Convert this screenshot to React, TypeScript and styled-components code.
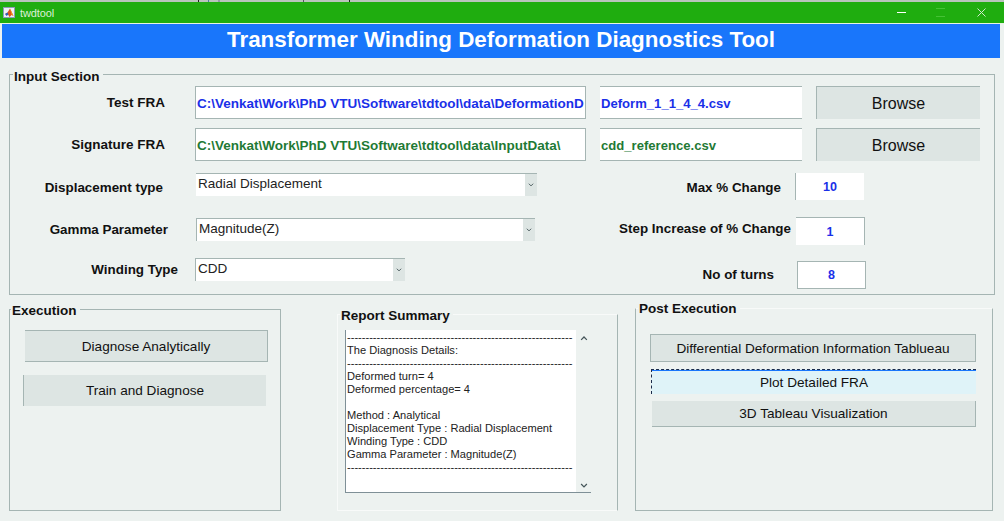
import React from 'react';
import styled, { createGlobalStyle } from 'styled-components';

const GlobalStyle = createGlobalStyle`
  html, body {
    margin: 0;
    padding: 0;
    background: #edf2f0;
    overflow: hidden;
  }
  * { box-sizing: border-box; }
`;

const Page = styled.div`
  width: 1004px;
  height: 521px;
  font-family: "Liberation Sans", Arial, sans-serif;
  background: #edf2f0;
  color: #111;
`;

const TopEdge = styled.div`
  height: 2px;
  background:
    linear-gradient(#222, #222) 198px 0 / 1px 100% no-repeat,
    linear-gradient(#4a7ea0, #4a7ea0) 208px 0 / 1px 100% no-repeat,
    linear-gradient(#99a, #99a) 218px 0 / 2px 100% no-repeat,
    linear-gradient(#556, #556) 303px 0 / 1px 100% no-repeat,
    linear-gradient(#222, #222) 349px 0 / 1px 100% no-repeat,
    #b9c4bc;
`;

const TitleBar = styled.div`
  height: 22px;
  background: #1fad0f;
  border-bottom: 1px solid #e6f3e3;
  display: flex;
  align-items: center;
  padding: 0 18px 0 3px;
  color: #dcefd8;
  font-size: 11px;
`;

const WindowName = styled.span`
  margin-left: 5px;
  flex: 1;
  letter-spacing: -0.1px;
`;

const WindowButton = styled.svg`
  width: 9px;
  height: 9px;
  margin-left: 30px;

  &:last-child {
    margin-left: 32px;
  }
`;

const Banner = styled.h1`
  margin: 0 4px 0 2px;
  height: 34px;
  background: #1976fb;
  color: #fff;
  font-size: 22.4px;
  font-weight: bold;
  line-height: 31px;
  text-align: center;
`;

const Panel = styled.section<{ $line?: string }>`
  position: relative;
  border: 1px solid ${({ $line }) => $line || '#a5b5b3'};
`;

const Legend = styled.span<{ $left?: number; $top?: number }>`
  position: absolute;
  top: ${({ $top }) => $top ?? -8}px;
  left: ${({ $left }) => $left ?? 3}px;
  padding: 0 3px 0 1px;
  background: #edf2f0;
  font-size: 13.5px;
  font-weight: bold;
  line-height: 15px;
  color: #111;
`;

const InputSection = styled(Panel)`
  margin: 16px 0 0 9px;
  width: 986px;
  height: 221px;
  padding: 11px 0 0 0;
`;

const FileRow = styled.div`
  display: flex;
  align-items: center;
  height: 33px;
  margin-bottom: 9px;
`;

const FileLabel = styled.label`
  width: 155px;
  text-align: right;
  font-size: 13.5px;
  font-weight: bold;
  margin-right: 30px;
  padding-bottom: 1px;
`;

const FileField = styled.div<{ $width: number; $color: string }>`
  width: ${({ $width }) => $width}px;
  height: 33px;
  margin-right: 14px;
  background: #fff;
  border: 1px solid #a5b5b3;
  color: ${({ $color }) => $color};
  font-size: 13.5px;
  font-weight: bold;
  line-height: 33px;
  padding-left: 1px;
  white-space: nowrap;
  overflow: hidden;
`;

const NameField = styled(FileField)`
  border-width: 1px 0 1px 0;
  font-size: 13.1px;
`;

const BrowseButton = styled.button`
  width: 164px;
  height: 33px;
  border: 0;
  border-top: 1px solid #a5b5b3;
  border-left: 1px solid #a5b5b3;
  background: #dde5e3;
  color: #111;
  font-family: inherit;
  font-size: 16px;
  padding: 2px 0 0;
`;

const LowerInputs = styled.div`
  display: flex;
  margin-top: 12px;
`;

const ChoiceColumn = styled.div`
  width: 600px;
`;

const ChoiceRow = styled.div<{ $gap: number }>`
  display: flex;
  align-items: center;
  height: 23px;
  margin-bottom: ${({ $gap }) => $gap}px;
`;

const ChoiceLabel = styled.label<{ $inset: number; $drop?: number }>`
  width: 185px;
  text-align: right;
  padding-right: ${({ $inset }) => $inset}px;
  margin-top: ${({ $drop }) => $drop ?? 0}px;
  font-size: 13.4px;
  font-weight: bold;
`;

const Select = styled.div<{ $width: number; $shift?: number; $edge?: boolean }>`
  display: flex;
  width: ${({ $width }) => $width}px;
  height: 23px;
  margin-left: ${({ $shift }) => $shift ?? 1}px;
  background: #fff;
  border-top: 1px solid #a5b5b3;
  border-left: ${({ $edge }) => ($edge ? '1px solid #a5b5b3' : '0')};
  font-size: 13.5px;
  color: #222;
`;

const SelectText = styled.span`
  flex: 1;
  padding-left: 2px;
  line-height: 20px;
`;

const SelectArrow = styled.span`
  width: 12px;
  background: #dde5e3;
  display: flex;
  align-items: center;
  justify-content: center;
`;

const SpinColumn = styled.div`
  width: 280px;
`;

const SpinRow = styled.div<{ $height: number; $gap: number }>`
  display: flex;
  align-items: center;
  height: ${({ $height }) => $height}px;
  margin-bottom: ${({ $gap }) => $gap}px;
`;

const SpinLabel = styled.label<{ $width: number; $inset: number; $lift: number }>`
  width: ${({ $width }) => $width}px;
  padding-right: ${({ $inset }) => $inset}px;
  margin-top: ${({ $lift }) => -$lift}px;
  text-align: right;
  font-size: 13.4px;
  font-weight: bold;
`;

const SpinValue = styled.div<{ $edge: string }>`
  width: 69px;
  height: 100%;
  background: #fff;
  border-style: solid;
  border-color: #a5b5b3;
  border-width: ${({ $edge }) => $edge};
  color: #1a30e8;
  font-size: 12.5px;
  font-weight: bold;
  display: flex;
  align-items: center;
  justify-content: center;
`;

const LowerPanels = styled.div`
  display: flex;
  align-items: flex-end;
  height: 216px;
`;

const ExecutionPanel = styled(Panel)`
  margin-left: 9px;
  width: 272px;
  height: 202px;
  padding-top: 20px;
`;

const ActionButton = styled.button<{ $left: number; $width: number; $height: number; $gap: number; $edge: string }>`
  display: block;
  margin: 0 0 ${({ $gap }) => $gap}px ${({ $left }) => $left}px;
  width: ${({ $width }) => $width}px;
  height: ${({ $height }) => $height}px;
  background: #dde5e3;
  border-style: solid;
  border-color: #a5b5b3;
  border-width: ${({ $edge }) => $edge};
  padding: 0;
  color: #111;
  font-family: inherit;
  font-size: 13.6px;
`;

const FocusedButton = styled(ActionButton)`
  background: #dff3f8;
  border-style: dashed;
  border-color: #1b2a4a;
  outline: none;
  box-shadow: inset 0 1px 0 0 #1976fb;
`;

const ReportPanel = styled(Panel)`
  margin-left: 56px;
  width: 281px;
  height: 197px;
  border-color: #f8faf9;
  border-right-color: #a5b5b3;
  padding: 15px 0 0 7px;
`;

const ReportBox = styled.div`
  display: flex;
  width: 246px;
  height: 163px;
  border-left: 1px solid #7f9097;
  border-bottom: 1px solid #7f9097;
`;

const ReportText = styled.pre`
  margin: 0;
  flex: 1;
  background: #fff;
  padding: 1px 0 0 1px;
  font-family: inherit;
  font-size: 11.1px;
  line-height: 13px;
  color: #222;
`;

const ReportScroll = styled.div`
  width: 15px;
  display: flex;
  flex-direction: column;
  justify-content: space-between;
  align-items: center;
  padding: 6px 0 4px;
`;

const PostPanel = styled(Panel)`
  margin-left: 17px;
  width: 358px;
  height: 203px;
  border-top-color: #f8faf9;
  padding-top: 25px;
`;

const Chevron = ({ up, size = 8 }: { up?: boolean; size?: number }) => (
  <svg width={size} height={size * 0.6} viewBox="0 0 8 5">
    <path d={up ? 'M1 4 L4 1 L7 4' : 'M1 1 L4 4 L7 1'} fill="none" stroke="#46565a" strokeWidth="1.3" />
  </svg>
);

const MatlabIcon = () => (
  <svg width="12" height="11" viewBox="0 0 12 11">
    <rect width="12" height="11" fill="#eef0f6" />
    <rect x="0.5" y="0.5" width="11" height="10" fill="none" stroke="#8d9bb5" />
    <path d="M2 7 L4.5 5.5 L7 1.5 L10.5 9 L8.5 8 L6.5 10 L5 7.5 Z" fill="#e0521a" />
    <path d="M7 1.5 L10.5 9 L8.5 7.5 Z" fill="#f4a01e" />
    <path d="M2 7 L4.5 5.5 L5.5 7.5 L3.5 9 Z" fill="#2f5fb5" />
  </svg>
);

const dashes = '-'.repeat(61);

const reportLines = [
  dashes,
  'The Diagnosis Details:',
  dashes,
  'Deformed turn= 4',
  'Deformed percentage= 4',
  '',
  'Method : Analytical',
  'Displacement Type : Radial Displacement',
  'Winding Type : CDD',
  'Gamma Parameter : Magnitude(Z)',
  dashes,
].join('\n');

export default function App() {
  return (
    <Page>
      <GlobalStyle />
      <TopEdge />
      <TitleBar>
        <MatlabIcon />
        <WindowName>twdtool</WindowName>
        <WindowButton viewBox="0 0 9 9">
          <path d="M0 4.5 H9" stroke="#ffffff" strokeWidth="1" />
        </WindowButton>
        <WindowButton viewBox="0 0 9 9">
          <path d="M0 0.5 H9 M0 8.5 H9" stroke="#45c235" strokeWidth="1" />
        </WindowButton>
        <WindowButton viewBox="0 0 9 9">
          <path d="M0.5 0.5 L8.5 8.5 M8.5 0.5 L0.5 8.5" stroke="#cfeacb" strokeWidth="1" />
        </WindowButton>
      </TitleBar>
      <Banner>Transformer Winding Deformation Diagnostics Tool</Banner>

      <InputSection>
        <Legend $top={-6}>Input Section</Legend>
        <FileRow>
          <FileLabel>Test FRA</FileLabel>
          <FileField $width={391} $color="#1a30e8">C:\Venkat\Work\PhD VTU\Software\tdtool\data\DeformationD</FileField>
          <NameField $width={202} $color="#1a30e8">Deform_1_1_4_4.csv</NameField>
          <BrowseButton>Browse</BrowseButton>
        </FileRow>
        <FileRow>
          <FileLabel>Signature FRA</FileLabel>
          <FileField $width={391} $color="#1f7a35">C:\Venkat\Work\PhD VTU\Software\tdtool\data\InputData\</FileField>
          <NameField $width={202} $color="#1f7a35">cdd_reference.csv</NameField>
          <BrowseButton>Browse</BrowseButton>
        </FileRow>
        <LowerInputs>
          <ChoiceColumn>
            <ChoiceRow $gap={22}>
              <ChoiceLabel $inset={32} $drop={6}>Displacement type</ChoiceLabel>
              <Select $width={341}>
                <SelectText>Radial Displacement</SelectText>
                <SelectArrow><Chevron size={6} /></SelectArrow>
              </Select>
            </ChoiceRow>
            <ChoiceRow $gap={17}>
              <ChoiceLabel $inset={27}>Gamma Parameter</ChoiceLabel>
              <Select $width={339} $edge>
                <SelectText>Magnitude(Z)</SelectText>
                <SelectArrow><Chevron size={6} /></SelectArrow>
              </Select>
            </ChoiceRow>
            <ChoiceRow $gap={0}>
              <ChoiceLabel $inset={17}>Winding Type</ChoiceLabel>
              <Select $width={210} $shift={0} $edge>
                <SelectText>CDD</SelectText>
                <SelectArrow><Chevron size={6} /></SelectArrow>
              </Select>
            </ChoiceRow>
          </ChoiceColumn>
          <SpinColumn>
            <SpinRow $height={27} $gap={17}>
              <SpinLabel $width={185} $inset={14} $lift={-2}>Max % Change</SpinLabel>
              <SpinValue $edge="0 0 0 1px">10</SpinValue>
            </SpinRow>
            <SpinRow $height={28} $gap={16}>
              <SpinLabel $width={186} $inset={5} $lift={6}>Step Increase of % Change</SpinLabel>
              <SpinValue $edge="1px 1px 0 0">1</SpinValue>
            </SpinRow>
            <SpinRow $height={28} $gap={0}>
              <SpinLabel $width={187} $inset={23} $lift={2}>No of turns</SpinLabel>
              <SpinValue $edge="1px">8</SpinValue>
            </SpinRow>
          </SpinColumn>
        </LowerInputs>
      </InputSection>

      <LowerPanels>
        <ExecutionPanel>
          <Legend $left={1} $top={-7}>Execution</Legend>
          <ActionButton $left={15} $width={243} $height={32} $gap={13} $edge="1px 1px 1px 0">Diagnose Analytically</ActionButton>
          <ActionButton $left={13} $width={243} $height={31} $gap={0} $edge="0 0 0 1px">Train and Diagnose</ActionButton>
        </ExecutionPanel>
        <ReportPanel>
          <Legend $left={2} $top={-7}>Report Summary</Legend>
          <ReportBox>
            <ReportText>{reportLines}</ReportText>
            <ReportScroll>
              <Chevron up />
              <Chevron />
            </ReportScroll>
          </ReportBox>
        </ReportPanel>
        <PostPanel>
          <Legend $left={2}>Post Execution</Legend>
          <ActionButton $left={14} $width={326} $height={28} $gap={7} $edge="1px">Differential Deformation Information Tablueau</ActionButton>
          <FocusedButton $left={15} $width={325} $height={25} $gap={7} $edge="1px 0 0 1px">Plot Detailed FRA</FocusedButton>
          <ActionButton $left={16} $width={324} $height={26} $gap={0} $edge="0 1px 1px 0">3D Tableau Visualization</ActionButton>
        </PostPanel>
      </LowerPanels>
    </Page>
  );
}
